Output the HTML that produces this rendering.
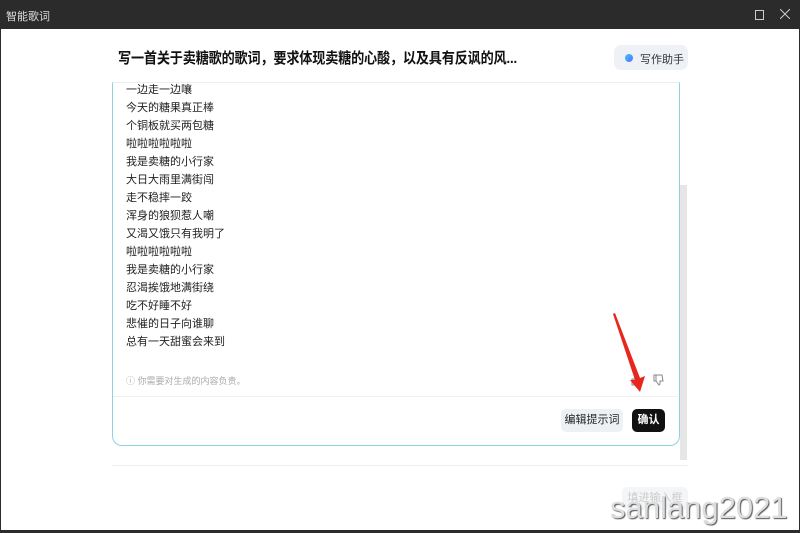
<!DOCTYPE html><html><head><meta charset="utf-8"><style>
body{margin:0;width:800px;height:533px;overflow:hidden;background:#2b2b2b;font-family:"Liberation Sans","Noto Sans CJK SC",sans-serif;position:relative}
.tb{position:absolute;left:0;top:0;width:800px;height:29px;background:#2b2b2b;color:#ddd;font-size:11px}
.main{position:absolute;left:1px;top:29px;width:798px;height:501px;background:#fff}
.a{position:absolute}
.ly{position:absolute;left:126px;font-size:11px;color:#222;line-height:18px}
</style></head><body>
<div class="tb"><span class="a" style="left:6px;top:8px">智能歌词</span>
<div class="a" style="left:755px;top:10px;width:7px;height:8px;border:1px solid #ccc"></div>
<svg class="a" style="left:780px;top:9px" width="10" height="10"><path d="M0,0L10,10M10,0L0,10" stroke="#ccc" stroke-width="1"/></svg></div>
<div class="main"></div>
<div class="a" style="left:118px;top:47px;font-size:15px;font-weight:bold;color:#111;letter-spacing:-0.2px;transform:scaleX(0.875);transform-origin:0 0;white-space:nowrap">写一首关于卖糖歌的歌词，要求体现卖糖的心酸，以及具有反讽的风...</div>
<div class="a" style="left:614px;top:45px;width:74px;height:25px;background:#eef2f6;border-radius:7px"></div>
<div class="a" style="left:625px;top:54px;width:8px;height:8px;border-radius:50%;background:linear-gradient(135deg,#3cf,#66f)"></div>
<span class="a" style="left:640px;top:51px;font-size:11px;color:#333">写作助手</span>
<div class="a" style="left:112px;top:82px;width:566px;height:362px;border:1px solid #8fd2e2;border-top:1px solid #eee;border-radius:0 0 10px 10px"></div>
<div class="a" style="left:680px;top:185px;width:7px;height:275px;background:#e6e6e6"></div>
<div class="ly" style="top:81px">一边走一边嚷<br>今天的糖果真正棒<br>个铜板就买两包糖<br>啦啦啦啦啦啦<br>我是卖糖的小行家<br>大日大雨里满街闯<br>走不稳摔一跤<br>浑身的狼狈惹人嘲<br>又渴又饿只有我明了<br>啦啦啦啦啦啦<br>我是卖糖的小行家<br>忍渴挨饿地满街绕<br>吃不好睡不好<br>悲催的日子向谁聊<br>总有一天甜蜜会来到</div>
<span class="a" style="left:126px;top:374px;font-size:9px;color:#aaa">ⓘ 你需要对生成的内容负责。</span>
<svg class="a" style="left:630px;top:374px" width="34" height="12"><path d="M2,5h2v6h-2zM4,5l3,-4 1,1v3h3l-1,6h-6" fill="none" stroke="#888"/><path d="M24,7h2v-6h-2zM26,7l3,4 1,-1v-3h3l-1,-6h-6" fill="none" stroke="#888"/></svg>
<div class="a" style="left:113px;top:396px;width:565px;height:1px;background:#f0f0f0"></div>
<div class="a" style="left:561px;top:409px;width:62px;height:23px;background:#eef1f4;border-radius:5px;font-size:11px;text-align:center;line-height:23px;color:#222">编辑提示词</div>
<div class="a" style="left:632px;top:409px;width:33px;height:23px;background:#111;border-radius:5px;font-size:11px;text-align:center;line-height:23px;color:#fff;font-weight:bold">确认</div>
<div class="a" style="left:112px;top:465px;width:576px;height:1px;background:#eee"></div>
<div class="a" style="left:622px;top:487px;width:66px;height:23px;background:#f4f5f7;border-radius:5px;font-size:11px;text-align:center;line-height:23px;color:#ccc">填进输入框</div>
<svg class="a" style="left:600px;top:310px" width="60" height="90"><polygon points="13,4 15,3 40,68 45,66 40,82 30,70 35,70" fill="#e8261d"/></svg>
<div class="a" style="left:610px;top:490px;font-size:31px;color:#ddd;text-shadow:1px 1px 1px #555">sanlang2021</div>
</body></html>
